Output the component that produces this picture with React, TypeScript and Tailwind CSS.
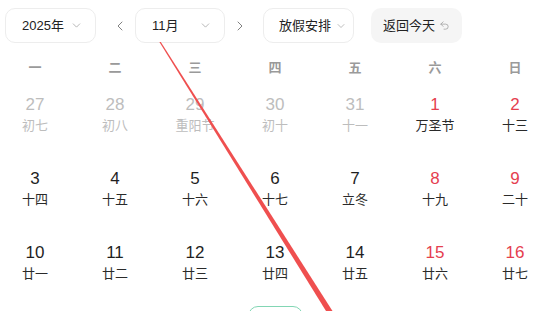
import { ChevronDown, ChevronLeft, ChevronRight, Undo2 } from "lucide-react";

type Day = {
  day: number;
  lunar: string;
  muted?: boolean;
  red?: boolean;
};

const weekdays = ["一", "二", "三", "四", "五", "六", "日"];

const days: Day[] = [
  { day: 27, lunar: "初七", muted: true },
  { day: 28, lunar: "初八", muted: true },
  { day: 29, lunar: "重阳节", muted: true },
  { day: 30, lunar: "初十", muted: true },
  { day: 31, lunar: "十一", muted: true },
  { day: 1, lunar: "万圣节", red: true },
  { day: 2, lunar: "十三", red: true },
  { day: 3, lunar: "十四" },
  { day: 4, lunar: "十五" },
  { day: 5, lunar: "十六" },
  { day: 6, lunar: "十七" },
  { day: 7, lunar: "立冬" },
  { day: 8, lunar: "十九", red: true },
  { day: 9, lunar: "二十", red: true },
  { day: 10, lunar: "廿一" },
  { day: 11, lunar: "廿二" },
  { day: 12, lunar: "廿三" },
  { day: 13, lunar: "廿四" },
  { day: 14, lunar: "廿五" },
  { day: 15, lunar: "廿六", red: true },
  { day: 16, lunar: "廿七", red: true },
];

// next week only peeks in at the bottom edge; today (Thursday) is outlined
const nextWeek = [false, false, false, true, false, false, false];

const Select = ({ label, width }: { label: string; width: string }) => (
  <div
    className={`flex items-center justify-between h-[35px] ${width} pl-[16px] pr-[12px] border border-[#ededed] rounded-[10px] bg-white`}
  >
    <span className="text-[13px] text-[#222]">{label}</span>
    <ChevronDown className="w-[13px] h-[13px] text-[#9a9a9a]" strokeWidth={1.3} />
  </div>
);

const DayCell = ({ d }: { d: Day }) => {
  const numColor = d.muted
    ? "text-[#bdbdbd]"
    : d.red
      ? "text-[#e5404f]"
      : "text-[#1f1f1f]";
  const lunarColor = d.muted ? "text-[#bdbdbd]" : "text-[#2a2a2a]";
  return (
    <div className="h-[74px] flex justify-center">
      <div className="w-[55px] h-[62px] mt-[4px] flex flex-col items-center pt-[10px] rounded-[10px]">
        <span className={`text-[17px] leading-[22px] ${numColor}`}>{d.day}</span>
        <span className={`text-[13px] leading-[18px] mt-[1px] ${lunarColor}`}>
          {d.lunar}
        </span>
      </div>
    </div>
  );
};

export default function App() {
  return (
    <div
      className="relative w-[554px] h-[311px] overflow-hidden bg-white"
      style={{ fontFamily: '"Liberation Sans", "Noto Sans CJK SC", sans-serif' }}
    >
      <div className="flex items-center pt-[8px] pl-[5px]">
        <Select label="2025年" width="w-[91px]" />
        <div className="w-[39px] flex pl-[16px]">
          <ChevronLeft className="w-[16px] h-[16px] text-[#777]" strokeWidth={1.4} />
        </div>
        <Select label="11月" width="w-[90px]" />
        <div className="w-[38px] flex pl-[7px]">
          <ChevronRight className="w-[16px] h-[16px] text-[#777]" strokeWidth={1.4} />
        </div>
        <div className="flex items-center justify-between h-[35px] w-[91px] pl-[15px] pr-[6px] border border-[#ededed] rounded-[10px]">
          <span className="text-[13px] text-[#222]">放假安排</span>
          <ChevronDown className="w-[12px] h-[12px] text-[#9a9a9a]" strokeWidth={1.3} />
        </div>
        <div className="ml-[17px] flex items-center gap-[4px] h-[35px] w-[91px] pl-[12px] rounded-[10px] bg-[#f5f5f5]">
          <span className="text-[13px] text-[#222]">返回今天</span>
          <Undo2 className="w-[11px] h-[11px] text-[#999]" strokeWidth={1.6} />
        </div>
      </div>

      <div className="grid grid-cols-[repeat(7,70px)] gap-x-[10px] mt-[15px]">
        {weekdays.map((w) => (
          <div
            key={w}
            className="h-[20px] flex items-center justify-center text-[13px] font-semibold text-[#9a9a9a]"
          >
            {w}
          </div>
        ))}
      </div>

      <div className="grid grid-cols-[repeat(7,70px)] gap-x-[10px] mt-[2px]">
        {days.map((d) => (
          <DayCell key={`${d.day}-${d.lunar}`} d={d} />
        ))}
        {nextWeek.map((isToday, i) => (
          <div key={i} className="h-[74px] flex justify-center">
            <div
              className={`w-[55px] h-[62px] mt-[4px] rounded-[10px] ${
                isToday ? "border border-[#82d6b4]" : ""
              }`}
            />
          </div>
        ))}
      </div>

      <svg
        className="absolute inset-0 pointer-events-none"
        width="554"
        height="311"
        viewBox="0 0 554 311"
      >
        <polygon points="159.4,42 160.8,42 332.5,311 326,311" fill="#ef4f4f" />
      </svg>
    </div>
  );
}
